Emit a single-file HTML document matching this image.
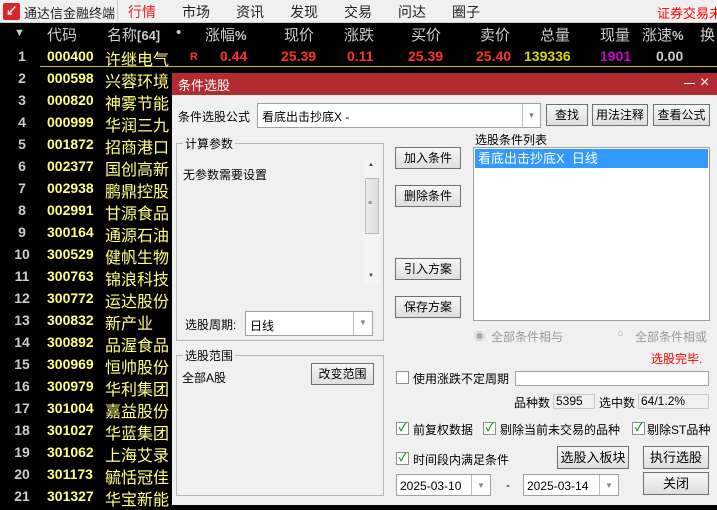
<!DOCTYPE html>
<html><head><meta charset="utf-8"><style>
*{margin:0;padding:0;box-sizing:border-box}
body{width:717px;height:505px;overflow:hidden;background:#000;font-family:"Liberation Sans","Noto Sans CJK SC",sans-serif;position:relative}
.a{position:absolute;white-space:nowrap}
.top{left:0;top:0;width:717px;height:23px;background:#f0f0f0;border-bottom:1px solid #ccc}
.m{font-size:14px;color:#222;top:2px}
.h{font-size:15px;color:#ccc;top:24px}
.n{font-size:14px;color:#ccc;font-weight:bold;left:12px;width:20px;text-align:center}
.c{font-size:14px;color:#ffff80;font-weight:bold;left:47px}
.nm{font-size:16px;color:#ffff80;left:105px}
.dlg{left:172px;top:73px;width:545px;height:432px;background:#f0f0f0}
.tb{left:172px;top:73px;width:545px;height:22px;background:#b22b31;color:#fff;font-size:13px;padding:2px 6px}
.t{font-size:12px;color:#000}
.btn{background:linear-gradient(#f6f6f6,#dedede);border:1px solid #707070;font-size:12px;text-align:center;color:#000}
.box{background:#fff;border:1px solid #a0a0a0}
.grp{border:1px solid #b8b8b8}
.gl{background:#f0f0f0;font-size:12px;padding:0 2px}
.dd{position:absolute;right:0;top:0;bottom:0;width:18px;border-left:1px solid #bbb;color:#888;font-size:8px;text-align:center;line-height:22px}
.cb{width:13px;height:13px;border:1px solid #8e8e8e;background:#fff;font-size:11px;color:#1a9a1a;line-height:11px;text-align:center;font-weight:bold}
.ro{background:#f0f0f0;border:1px solid #c8c8c8;font-size:12px;padding-left:2px}
</style></head><body>
<div class="a top"></div>
<div class="a" style="left:3px;top:3px;width:17px;height:17px;background:#d8262c;border-radius:2px;color:#fff;font-size:12px;text-align:center;line-height:17px;font-weight:bold">↙</div>
<div class="a m" style="left:24px;top:3px;font-size:13px">通达信金融终端</div>
<div class="a" style="left:117px;top:0;width:1px;height:23px;background:#ccc"></div>
<div class="a m" style="left:128px;color:#e82020">行情</div>
<div class="a m" style="left:182px">市场</div>
<div class="a m" style="left:236px">资讯</div>
<div class="a m" style="left:290px">发现</div>
<div class="a m" style="left:344px">交易</div>
<div class="a m" style="left:398px">问达</div>
<div class="a m" style="left:452px">圈子</div>
<div class="a m" style="left:657px;color:#f00;font-size:13px;top:3px">证券交易未</div>

<div class="a h" style="left:14px;font-size:11px;top:27px">▼</div>
<div class="a h" style="left:47px">代码</div>
<div class="a h" style="left:107px">名称<b style="font-size:13px">[64]</b></div>
<div class="a h" style="left:176px">•</div>
<div class="a h" style="left:205px">涨幅<b style="font-size:13px">%</b></div>
<div class="a h" style="left:284px">现价</div>
<div class="a h" style="left:344px">涨跌</div>
<div class="a h" style="left:411px">买价</div>
<div class="a h" style="left:480px">卖价</div>
<div class="a h" style="left:540px">总量</div>
<div class="a h" style="left:600px">现量</div>
<div class="a h" style="left:642px">涨速<b style="font-size:13px">%</b></div>
<div class="a h" style="left:700px">换</div>

<div class="a" style="left:40px;top:66px;width:677px;height:1px;background:#c8c000"></div>
<div class="a" style="top:48px;left:0;font-size:14px;font-weight:bold;color:#ff3030">
<span class="a" style="left:190px;top:3px;font-size:11px">R</span>
<span class="a" style="left:220px">0.44</span>
<span class="a" style="left:281px">25.39</span>
<span class="a" style="left:347px">0.11</span>
<span class="a" style="left:408px">25.39</span>
<span class="a" style="left:476px">25.40</span>
<span class="a" style="left:524px;color:#d8d800">139336</span>
<span class="a" style="left:600px;color:#d000d0">1901</span>
<span class="a" style="left:656px;color:#ccc">0.00</span>
</div>

<div id="rows"></div>
<script>
var d=[["000400","许继电气"],["000598","兴蓉环境"],["000820","神雾节能"],["000999","华润三九"],["001872","招商港口"],["002377","国创高新"],["002938","鹏鼎控股"],["002991","甘源食品"],["300164","通源石油"],["300529","健帆生物"],["300763","锦浪科技"],["300772","运达股份"],["300832","新产业"],["300892","品渥食品"],["300969","恒帅股份"],["300979","华利集团"],["301004","嘉益股份"],["301027","华蓝集团"],["301062","上海艾录"],["301173","毓恬冠佳"],["301327","华宝新能"]];
var h="";for(var i=0;i<21;i++){var y=46+i*22;h+='<div class="a n" style="top:'+(y+2)+'px">'+(i+1)+'</div><div class="a c" style="top:'+(y+2)+'px">'+d[i][0]+'</div><div class="a nm" style="top:'+y+'px">'+d[i][1]+'</div>';}
document.getElementById("rows").innerHTML=h;
</script>

<div class="a dlg"></div>
<div class="a tb">条件选股</div>
<div class="a" style="left:684px;top:83px;width:11px;height:1px;background:#fff"></div>
<div class="a" style="left:700px;top:74px;color:#fff;font-size:16px">×</div>

<div class="a t" style="left:178px;top:108px">条件选股公式</div>
<div class="a box" style="left:257px;top:103px;width:284px;height:25px"><span class="a t" style="left:4px;top:4px">看底出击抄底X -</span><div class="dd" style="line-height:24px">▼</div></div>
<div class="a btn" style="left:546px;top:104px;width:42px;height:22px;line-height:20px">查找</div>
<div class="a btn" style="left:592px;top:104px;width:56px;height:22px;line-height:20px">用法注释</div>
<div class="a btn" style="left:653px;top:104px;width:57px;height:22px;line-height:20px">查看公式</div>

<div class="a grp" style="left:176px;top:143px;width:208px;height:198px"></div>
<div class="a gl" style="left:183px;top:135px">计算参数</div>
<div class="a t" style="left:183px;top:166px">无参数需要设置</div>
<div class="a" style="left:364px;top:160px;width:16px;height:125px;background:#f4f4f4"></div>
<div class="a" style="left:365px;top:178px;width:14px;height:56px;background:linear-gradient(90deg,#eee,#ddd);border:1px solid #bbb"></div>
<div class="a" style="left:368px;top:162px;font-size:6px;color:#444">▲</div>
<div class="a" style="left:368px;top:273px;font-size:6px;color:#444">▼</div>
<div class="a" style="left:368px;top:202px;font-size:7px;color:#555;line-height:3px">≡</div>
<div class="a t" style="left:185px;top:316px">选股周期:</div>
<div class="a box" style="left:245px;top:311px;width:128px;height:25px"><span class="a t" style="left:4px;top:5px">日线</span><div class="dd" style="width:19px">▼</div></div>

<div class="a btn" style="left:395px;top:147px;width:66px;height:22px;line-height:20px">加入条件</div>
<div class="a btn" style="left:395px;top:185px;width:66px;height:22px;line-height:20px">删除条件</div>
<div class="a btn" style="left:395px;top:258px;width:66px;height:22px;line-height:20px">引入方案</div>
<div class="a btn" style="left:395px;top:296px;width:66px;height:22px;line-height:20px">保存方案</div>

<div class="a t" style="left:475px;top:131px">选股条件列表</div>
<div class="a box" style="left:473px;top:147px;width:237px;height:174px"></div>
<div class="a" style="left:475px;top:149px;width:233px;height:19px;background:#3399ff;color:#fff;font-size:13px;padding-left:3px;line-height:19px">看底出击抄底X&nbsp; 日线</div>

<div class="a" style="left:474px;top:328px;font-size:11px;color:#aaa">◉</div>
<div class="a t" style="left:491px;top:328px;color:#999">全部条件相与</div>
<div class="a" style="left:617px;top:328px;font-size:11px;color:#aaa">○</div>
<div class="a t" style="left:635px;top:328px;color:#999">全部条件相或</div>
<div class="a t" style="left:651px;top:350px;color:#f00">选股完毕.</div>

<div class="a grp" style="left:176px;top:355px;width:208px;height:141px"></div>
<div class="a gl" style="left:183px;top:347px">选股范围</div>
<div class="a t" style="left:182px;top:369px">全部A股</div>
<div class="a btn" style="left:311px;top:363px;width:63px;height:22px;line-height:20px">改变范围</div>

<div class="a cb" style="left:396px;top:371px"></div>
<div class="a t" style="left:413px;top:370px">使用涨跌不定周期</div>
<div class="a box" style="left:515px;top:371px;width:194px;height:15px"></div>
<div class="a t" style="left:514px;top:394px">品种数</div>
<div class="a ro" style="left:553px;top:394px;width:42px;height:15px;line-height:13px">5395</div>
<div class="a t" style="left:599px;top:394px">选中数</div>
<div class="a ro" style="left:638px;top:394px;width:71px;height:15px;line-height:13px">64/1.2%</div>

<div class="a cb" style="left:396px;top:422px">✓</div>
<div class="a t" style="left:413px;top:421px">前复权数据</div>
<div class="a cb" style="left:483px;top:422px">✓</div>
<div class="a t" style="left:500px;top:421px">剔除当前未交易的品种</div>
<div class="a cb" style="left:632px;top:422px">✓</div>
<div class="a t" style="left:647px;top:421px">剔除ST品种</div>

<div class="a cb" style="left:396px;top:452px">✓</div>
<div class="a t" style="left:413px;top:451px">时间段内满足条件</div>
<div class="a btn" style="left:557px;top:446px;width:72px;height:23px;line-height:21px;font-size:13px">选股入板块</div>
<div class="a btn" style="left:643px;top:446px;width:66px;height:23px;line-height:21px;font-size:13px">执行选股</div>
<div class="a btn" style="left:643px;top:472px;width:66px;height:23px;line-height:21px;font-size:13px">关闭</div>

<div class="a box" style="left:396px;top:474px;width:95px;height:22px"><span class="a t" style="left:3px;top:4px">2025-03-10</span><div class="dd" style="width:19px;line-height:21px">▼</div></div>
<div class="a t" style="left:506px;top:478px">-</div>
<div class="a box" style="left:523px;top:474px;width:96px;height:22px"><span class="a t" style="left:3px;top:4px">2025-03-14</span><div class="dd" style="width:19px;line-height:21px">▼</div></div>
</body></html>
